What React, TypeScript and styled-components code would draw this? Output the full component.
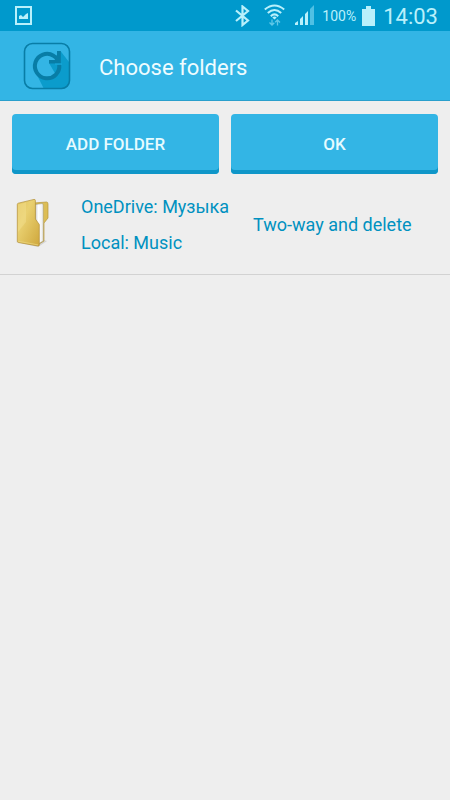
import React from "react";
import styled, { createGlobalStyle } from "styled-components";

const GlobalStyle = createGlobalStyle`
  * { box-sizing: border-box; }
  html, body { margin: 0; background: #eeeeee; }
  body { font-family: Roboto, "Noto Sans", sans-serif; }
`;

const Screen = styled.div`
  min-height: 100vh;
  background: #eeeeee;
`;

const StatusBar = styled.div`
  display: flex;
  align-items: center;
  justify-content: space-between;
  height: 31px;
  padding: 0 12px 0 15px;
  background: #0099cc;
  color: #b9f0fb;
`;

const StatusGroup = styled.div`
  display: flex;
  align-items: center;
`;

const Icon = styled.svg<{ $gap?: number }>`
  display: block;
  flex: none;
  margin-right: ${(p) => p.$gap ?? 0}px;
`;

const Percent = styled.span`
  font-size: 14px;
  line-height: 30px;
  margin-right: 6px;
`;

const Clock = styled.time`
  font-size: 22px;
  line-height: 30px;
  font-weight: 400;
  padding-top: 2px;
  margin-left: 8px;
`;

const AppBar = styled.header`
  display: flex;
  align-items: center;
  gap: 28px;
  height: 70px;
  padding: 0 23px;
  background: #33b5e5;
  border-bottom: 1px solid #2a9fcc;
`;

const Title = styled.h1`
  margin: 0;
  padding-top: 4px;
  color: #eefcff;
  font-size: 22px;
  line-height: 26px;
  font-weight: 400;
`;

const Actions = styled.div`
  display: grid;
  grid-template-columns: 1fr 1fr;
  gap: 12px;
  padding: 13px 12px 0;
`;

const ActionButton = styled.button`
  height: 60px;
  padding: 0;
  border: 0;
  border-radius: 4px;
  background: #33b5e5;
  box-shadow: inset 0 -4px #0f96c8;
  color: #e6fbff;
  font-family: inherit;
  font-size: 17px;
  line-height: 20px;
  font-weight: 500;
  cursor: pointer;
`;

const FolderList = styled.ul`
  margin: 0;
  padding: 0;
  list-style: none;
`;

const FolderRow = styled.li`
  display: grid;
  grid-template-columns: 66px 172px 1fr;
  align-items: center;
  height: 101px;
  padding: 2px 15px 0;
  border-bottom: 1px solid #d2d2d2;
  color: #0091c0;
  font-size: 18px;
  line-height: 22px;
`;

const Paths = styled.div`
  display: flex;
  flex-direction: column;
  gap: 14px;
  white-space: nowrap;
`;

const Mode = styled.span`
  white-space: nowrap;
`;

function AppLogo() {
  return (
    <Icon width="48" height="48" viewBox="0 0 48 48" aria-hidden="true">
      <path d="M37.5 9 L46 20 V40 Q46 46 40 46 H20.5 L14 33 L26 21 Z" fill="#0b9ccc" />
      <path d="M26 21 L33 33 A12.2 12.2 0 1 1 33 15.5 V18 H26 Z" fill="#33b5e5" />
      <path d="M36.200 22.500 A12.2 12.2 0 1 1 30.5 13.7 Q33 15 34.500 18" fill="none" stroke="#087da6" strokeWidth="4" />
      <path d="M34 9 H37.8 V21.4 H26 V18 H34 Z" fill="#087da6" />
      <path d="M32 22.100 H39" stroke="#1ba7d8" strokeWidth="1.2" />
      <rect x="1.5" y="1.5" width="45" height="45" rx="8" fill="none" stroke="#087da6" strokeWidth="1.6" />
    </Icon>
  );
}

function FolderIcon() {
  return (
    <Icon width="36" height="54" viewBox="0 0 36 54" aria-hidden="true">
      <defs>
        <linearGradient id="cover" x1="0" y1="0" x2="1" y2="1">
          <stop offset="0" stopColor="#e2c55f" />
          <stop offset="0.35" stopColor="#e9d070" />
          <stop offset="1" stopColor="#cfa73c" />
        </linearGradient>
        <linearGradient id="paper" x1="0" y1="0" x2="1" y2="0">
          <stop offset="0" stopColor="#c4c4c4" />
          <stop offset="0.4" stopColor="#ffffff" />
          <stop offset="1" stopColor="#ececec" />
        </linearGradient>
      </defs>
      <path d="M1 44 L23 49 L32 43 L24 41 Z" fill="#b0b0b0" opacity="0.45" />
      <path d="M19 5 L31.5 4 Q33 4 33 6 V20 L29 25 V43 L24 46 H19 Z" fill="#dcbd55" stroke="#b89639" strokeWidth="0.7" />
      <path d="M20 6.500 L27.500 5.500 L28.200 7 V43 L23 46 H20 Z" fill="url(#paper)" stroke="#999070" strokeWidth="0.5" />
      <path d="M2.300 6.500 Q2.300 5.400 3.300 5.200 L19 1.400 Q20.400 1.200 20.400 2.600 V21 L24.300 26.500 V47 Q24.300 48.200 23 48 L3.300 44.500 Q2.300 44.300 2.300 43.200 Z" fill="url(#cover)" stroke="#b3913a" strokeWidth="0.7" />
      <path d="M3 6.500 L11 4.500 V24 L3 34 Z" fill="#f5e59b" opacity="0.35" />
      <path d="M3.500 43.300 L23 46.900" stroke="#ecd77f" strokeWidth="0.7" />
    </Icon>
  );
}

export default function App() {
  return (
    <Screen>
      <GlobalStyle />
      <StatusBar>
        <Icon width="17" height="19" viewBox="0 0 17 19" aria-hidden="true">
          <path fillRule="evenodd" d="M0 0 H17 V19 H0 Z M2 2 V17 H15 V2 Z" fill="currentColor" />
          <path d="M4 13 V10 L6 9 L8 11 L11 8 L13 7 V13 Z" fill="currentColor" />
        </Icon>
        <StatusGroup>
          <Icon $gap={14} width="15" height="22" viewBox="0 0 15 22" aria-hidden="true">
            <path d="M1 5.500 L13 15.500 L7.500 20 V1.500 L13 6 L1 16" fill="none" stroke="currentColor" strokeWidth="2.2" />
          </Icon>
          <Icon $gap={10} width="21" height="24" viewBox="0 0 21 24" aria-hidden="true">
            <g fill="none" stroke="currentColor" strokeWidth="2">
              <path d="M0.800 5.500 Q10.500 -2.500 20.200 5.500" />
              <path d="M3.800 9 Q10.500 3 17.200 9" />
              <path d="M6.800 12.200 Q10.500 8.500 14.200 12.200" />
            </g>
            <path d="M8.300 13.500 Q10.500 11.500 12.700 13.500 L10.500 15.500 Z" fill="currentColor" />
            <path d="M8 15.500 V21 M5.500 18.500 L8 21 L10.300 18.700 M13.500 21.500 V16 M11.200 18.300 L13.500 16 L16 18.500" fill="none" stroke="#60c8e8" strokeWidth="1.300" />
          </Icon>
          <Icon $gap={7} width="20" height="21" viewBox="0 0 20 21" aria-hidden="true">
            <path d="M0 18 L3 16 V20 H0 Z M5 14 L8 11 V20 H5 Z M10 9 L13 6 V20 H10 Z" fill="currentColor" />
            <path d="M15 4 L19 0 V20 H15 Z" fill="#4fc0e4" />
          </Icon>
          <Percent>100%</Percent>
          <Icon width="13" height="20" viewBox="0 0 13 20" aria-hidden="true">
            <path d="M4 0 H9 V3 H13 V20 H0 V3 H4 Z" fill="currentColor" />
          </Icon>
          <Clock>14:03</Clock>
        </StatusGroup>
      </StatusBar>
      <AppBar>
        <AppLogo />
        <Title>Choose folders</Title>
      </AppBar>
      <main>
        <Actions>
          <ActionButton type="button">ADD FOLDER</ActionButton>
          <ActionButton type="button">OK</ActionButton>
        </Actions>
        <FolderList>
          <FolderRow>
            <FolderIcon />
            <Paths>
              <span>OneDrive: Музыка</span>
              <span>Local: Music</span>
            </Paths>
            <Mode>Two-way and delete</Mode>
          </FolderRow>
        </FolderList>
      </main>
    </Screen>
  );
}
